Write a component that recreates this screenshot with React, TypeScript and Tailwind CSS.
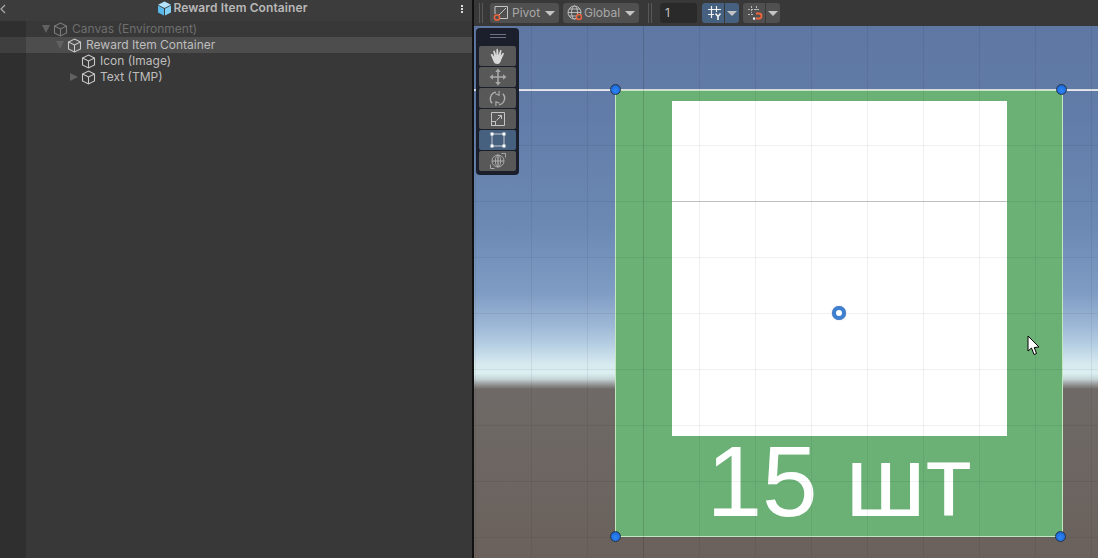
import React from 'react';

const font = { fontFamily: 'Inter, "Liberation Sans", sans-serif' };

function CubeIcon({ className = 'text-[#c4c4c4]' }: { className?: string }) {
  return (
    <svg width="15" height="15" viewBox="0 0 15 15" fill="none" stroke="currentColor" strokeWidth="1.1" className={className}>
      <path d="M7.5 1 L13.5 4 V11 L7.5 14 L1.5 11 V4 Z" />
      <path d="M1.5 4 L7.5 7 L13.5 4 M7.5 7 V14" />
    </svg>
  );
}

function HeaderCube() {
  return (
    <svg width="15" height="15" viewBox="0 0 15 15">
      <path d="M7.5 0.5 L14 3.8 L7.5 7 L1 3.8 Z" fill="#b4e4fb" />
      <path d="M1 4.6 L7 7.7 V14.5 L1 11.4 Z" fill="#58b8ea" />
      <path d="M14 4.6 L8 7.7 V14.5 L14 11.4 Z" fill="#82cff4" />
    </svg>
  );
}

function Row({ label, indent, arrow, dim, selected }: { label: string; indent: string; arrow?: 'down' | 'right'; dim?: boolean; selected?: boolean }) {
  return (
    <div className={`flex h-4 ${selected ? 'bg-[#3f3f3f]' : ''}`}>
      <div className="w-[26px] shrink-0" />
      <div className={`flex flex-1 items-center ${selected ? 'bg-[#4d4d4d]' : 'bg-[#383838]'} ${indent}`}>
        <div className="flex w-[14px] shrink-0 items-center justify-center">
          {arrow === 'down' && <div className="h-0 w-0 border-x-[4.5px] border-t-[8px] border-x-transparent border-t-[#616161]" />}
          {arrow === 'right' && <div className="h-0 w-0 border-y-[4.5px] border-l-[8px] border-y-transparent border-l-[#616161]" />}
        </div>
        <CubeIcon className={dim ? 'text-[#7a7a7a]' : 'text-[#c8c8c8]'} />
        <span className={`ml-[4px] text-[12px] font-normal leading-4 ${dim ? 'text-[#6e6e6e]' : 'text-[#bebebe]'}`}>{label}</span>
      </div>
    </div>
  );
}

function Hierarchy() {
  return (
    <div className="flex w-[472px] shrink-0 flex-col bg-[#2f2f2f]">
      <div className="relative flex h-[21px] items-center justify-center bg-[#3c3c3c] pb-[5px] pr-[7px]">
        <svg width="6" height="10" viewBox="0 0 6 10" fill="none" stroke="#aaaaaa" strokeWidth="1.2" className="absolute left-0 top-[4px]">
          <path d="M5 1 L1 5 L5 9" />
        </svg>
        <HeaderCube />
        <span className="ml-[1px] text-[12px] font-semibold tracking-[0.1px] text-[#b8b8b8]">Reward Item Container</span>
        <div className="absolute right-[9px] top-[5px] flex flex-col gap-[1px]">
          <div className="h-[2px] w-[2px] bg-[#dddddd]" />
          <div className="h-[2px] w-[2px] bg-[#dddddd]" />
          <div className="h-[2px] w-[2px] bg-[#dddddd]" />
        </div>
      </div>
      <Row label="Canvas (Environment)" indent="pl-[13px]" arrow="down" dim />
      <Row label="Reward Item Container" indent="pl-[27px]" arrow="down" selected />
      <Row label="Icon (Image)" indent="pl-[41px]" />
      <Row label="Text (TMP)" indent="pl-[41px]" arrow="right" />
      <div className="flex flex-1">
        <div className="w-[26px] shrink-0" />
        <div className="flex-1 bg-[#383838]" />
      </div>
    </div>
  );
}

function Caret() {
  return <div className="h-0 w-0 border-x-[5px] border-t-[5px] border-x-transparent border-t-[#c4c4c4]" />;
}

function Grip() {
  return (
    <div className="flex h-5 gap-[2px]">
      <div className="w-px bg-[#585858]" />
      <div className="w-px bg-[#585858]" />
    </div>
  );
}

function PivotIcon() {
  return (
    <svg width="16" height="16" viewBox="0 0 16 16" fill="none">
      <path d="M3 1.5 H14.5 V13.5 H7 M2 9 V1.5 H3 M5 11 L13 3" stroke="#c4c4c4" strokeWidth="1" />
      <circle cx="4" cy="12.5" r="2.6" stroke="#f0643c" strokeWidth="1.5" />
    </svg>
  );
}

function GlobalIcon() {
  return (
    <svg width="16" height="16" viewBox="0 0 16 16" fill="none" stroke="#c4c4c4" strokeWidth="0.9">
      <circle cx="7.5" cy="7.5" r="6.5" />
      <ellipse cx="7.5" cy="7.5" rx="3" ry="6.5" />
      <path d="M1 7.5 H14 M2 4 H13 M2 11 H9" />
      <circle cx="12" cy="12" r="2.5" fill="#505050" stroke="#f0643c" strokeWidth="1.4" />
    </svg>
  );
}

function SnapIcon() {
  return (
    <svg width="16" height="16" viewBox="0 0 16 16" fill="none" stroke="#f0f0f0" strokeWidth="1.2">
      <path d="M4.5 1 V13 M9.5 1 V7 M1 4.5 H14 M1 9.5 H7" />
      <path d="M8.5 8.5 L11 11.5 L13.5 8.5 M11 11.5 V15" strokeWidth="1.6" />
    </svg>
  );
}

function SnapMagnetIcon() {
  return (
    <svg width="16" height="16" viewBox="0 0 16 16" fill="none">
      <path d="M4.5 1 V8 M9.5 1 V5 M1 4.5 H13 M1 9.5 H6" stroke="#b8b8b8" strokeWidth="1" strokeDasharray="2 1" />
      <path d="M9 8.5 H12 A2.5 2.5 0 0 1 12 13.5 H9" stroke="#f0643c" strokeWidth="1.8" />
      <rect x="6" y="12.5" width="2.2" height="2.2" fill="#f0f0f0" />
    </svg>
  );
}

function Toolbar() {
  return (
    <div className="flex h-[26px] shrink-0 items-center bg-[#383838] text-[12px] text-[#a8a8a8]">
      <div className="ml-[5px]"><Grip /></div>
      <div className="ml-[7px] flex h-5 w-[69px] items-center rounded-[3px] bg-[#505050] pl-[3px]">
        <PivotIcon />
        <span className="ml-[3px]">Pivot</span>
        <div className="ml-[5px]"><Caret /></div>
      </div>
      <div className="ml-[4px] flex h-5 w-[76px] items-center rounded-[3px] bg-[#505050] pl-[4px]">
        <GlobalIcon />
        <span className="ml-[1px]">Global</span>
        <div className="ml-[5px]"><Caret /></div>
      </div>
      <div className="ml-[9px]"><Grip /></div>
      <div className="ml-[8px] flex h-5 w-[37px] items-center rounded-[3px] bg-[#2a2a2a] pl-[5px] text-[#c4c4c4]">1</div>
      <div className="ml-[5px] flex h-5 w-[37px] overflow-hidden rounded-[3px] bg-[#46607f]">
        <div className="flex w-[23px] items-center justify-center border-r border-[#383838] pl-[3px]"><SnapIcon /></div>
        <div className="flex flex-1 items-center justify-center"><Caret /></div>
      </div>
      <div className="ml-[4px] flex h-5 w-[37px] overflow-hidden rounded-[3px] bg-[#505050]">
        <div className="flex w-[23px] items-center justify-center border-r border-[#383838] pl-[2px]"><SnapMagnetIcon /></div>
        <div className="flex flex-1 items-center justify-center"><Caret /></div>
      </div>
    </div>
  );
}

function ToolButton({ active, children }: { active?: boolean; children: React.ReactNode }) {
  return (
    <div className={`flex h-5 w-[37px] items-center justify-center rounded-[2px] ${active ? 'bg-[#46607f]' : 'bg-[#585858]'}`}>
      {children}
    </div>
  );
}

function Toolbox() {
  return (
    <div className="absolute left-[2px] top-[2px] flex h-[147px] w-[43px] flex-col items-center rounded-[4px] bg-[#1a1f2b]">
      <div className="mt-[6px] flex h-[12px] flex-col gap-[2px]">
        <div className="h-px w-4 bg-[#6c7280]" />
        <div className="h-px w-4 bg-[#6c7280]" />
      </div>
      <div className="flex flex-col gap-px">
        <ToolButton>
          <svg width="17" height="17" viewBox="0 0 16 16" fill="#d8d8d8">
            <path d="M2 7 C1 6 2.5 5 3.5 6 L5 8.5 L4 3 C4 2 5.3 2 5.6 3 L6.8 6.8 L7 1.5 C7 0.5 8.4 0.5 8.5 1.5 L9 6.8 L10.3 2.4 C10.6 1.4 11.9 1.7 11.7 2.8 L11 7.5 L12.6 5 C13.2 4.2 14.4 4.8 13.9 5.8 L11.5 11 C11 13.5 10 15 8 15 C5.5 15 5 14 4 12 Z" />
          </svg>
        </ToolButton>
        <ToolButton>
          <svg width="18" height="18" viewBox="0 0 16 16" fill="#a8a8a8" stroke="#a8a8a8" strokeWidth="1.4">
            <path d="M8 2 V14 M2 8 H14" fill="none" />
            <path d="M8 0.5 L10.5 3.5 H5.5 Z M8 15.5 L10.5 12.5 H5.5 Z M0.5 8 L3.5 5.5 V10.5 Z M15.5 8 L12.5 5.5 V10.5 Z" stroke="none" />
          </svg>
        </ToolButton>
        <ToolButton>
          <svg width="17" height="17" viewBox="0 0 16 16" fill="none" stroke="#b0b0b0" strokeWidth="1.3">
            <path d="M3 12.5 A6.3 6.3 0 0 1 6.5 2 M13 3.5 A6.3 6.3 0 0 1 9.5 14" />
            <path d="M9.5 1 L9.5 5 L6 3.5 M6.5 15 L6.5 11 L10 12.5" strokeWidth="1" />
          </svg>
        </ToolButton>
        <ToolButton>
          <svg width="16" height="16" viewBox="0 0 16 16" fill="none" stroke="#c4c4c4" strokeWidth="1">
            <path d="M1.5 10 V1.5 H14.5 V14.5 H6" />
            <rect x="1.5" y="10.5" width="4" height="4" />
            <path d="M6.5 9.5 L11.5 4.5 M8 4.5 H11.5 V8" />
          </svg>
        </ToolButton>
        <ToolButton active>
          <svg width="16" height="16" viewBox="0 0 16 16" fill="#ffffff">
            <path d="M2 2 H14 V14 H2 Z" fill="none" stroke="#e8e8e8" strokeWidth="0.8" />
            <rect x="0.5" y="0.5" width="3" height="3" />
            <rect x="12.5" y="0.5" width="3" height="3" />
            <rect x="0.5" y="12.5" width="3" height="3" />
            <rect x="12.5" y="12.5" width="3" height="3" />
          </svg>
        </ToolButton>
        <ToolButton>
          <svg width="18" height="18" viewBox="0 0 18 18" fill="none" stroke="#b0b0b0" strokeWidth="0.9">
            <circle cx="9" cy="9" r="6" />
            <ellipse cx="9" cy="9" rx="2.6" ry="6" />
            <path d="M3 9 H15 M9 3 V15" strokeWidth="1.2" />
            <path d="M12.5 1.5 H16.5 V5.5 M5.5 16.5 H1.5 V12.5" />
          </svg>
        </ToolButton>
      </div>
    </div>
  );
}

function Handle({ className }: { className: string }) {
  return <div className={`absolute h-[11px] w-[11px] rounded-full border border-[#26354d] bg-[radial-gradient(circle_at_50%_60%,#2f86f5_0%,#1f6ee0_60%,#17509f_100%)] ${className}`} />;
}

function GridOverlay() {
  const xs = [1, 57, 113, 225, 281, 337, 393, 449, 505, 561, 617];
  const ys = [63, 119, 231, 287, 343, 399, 455, 511];
  return (
    <svg width="624" height="532" className="pointer-events-none absolute left-0 top-0">
      {xs.map((x) => (
        <line key={x} x1={x + 0.5} y1="0" x2={x + 0.5} y2="532" stroke="#000000" strokeOpacity="0.06" />
      ))}
      {ys.map((y) => (
        <line key={y} x1="0" y1={y + 0.5} x2="624" y2={y + 0.5} stroke="#000000" strokeOpacity="0.06" />
      ))}
      <line x1="169.5" y1="0" x2="169.5" y2="532" stroke="#000000" strokeOpacity="0.14" />
      <line x1="0" y1="175.5" x2="624" y2="175.5" stroke="#000000" strokeOpacity="0.06" />
      <line x1="198" y1="175.5" x2="533" y2="175.5" stroke="#000000" strokeOpacity="0.2" />
    </svg>
  );
}

function Scene() {
  return (
    <div className="relative flex-1 overflow-hidden bg-[linear-gradient(180deg,#5e78a3_0px,#617ca8_90px,#6c89b4_200px,#7f9cc4_267px,#9db8d6_300px,#b8d0e4_320px,#d4e8ee_337px,#dcf0f2_347px,#c5d5d8_353px,#9a9c9c_358px,#6f6a67_363px,#6a615c_532px)]">
      <div className="absolute left-0 top-[63px] h-[2px] w-full bg-[#e6e8ee]" />

      <div className="absolute left-[141px] top-[64px] h-[447px] w-[448px] border border-[#c3e8c0] bg-[#6bb176]">
        <div className="ml-[56px] mt-[10px] h-[335px] w-[335px] bg-white" />
        <div
          className="mt-[-5px] text-center text-[100px] leading-[100px] text-white"
          style={{ fontFamily: '"Liberation Sans", Arial, sans-serif' }}
        >
          15 шт
        </div>
      </div>

      <GridOverlay />

      <Handle className="left-[136px] top-[58px]" />
      <Handle className="left-[582px] top-[58px]" />
      <Handle className="left-[136px] top-[505px]" />
      <Handle className="left-[581px] top-[505px]" />

      {/* pivot */}
      <div className="absolute left-[358px] top-[280px] h-[14px] w-[14px] rounded-full border-[4px] border-[#3f7fd0] bg-white shadow-[0_0_1px_#6b7a90]" />

      {/* mouse cursor */}
      <svg width="14" height="21" viewBox="0 0 14 21" className="absolute left-[553px] top-[309px]">
        <path d="M1 1 V16 L4.5 13 L7 19.5 L9.5 18.5 L7.2 12.5 L12 12 Z" fill="#ffffff" stroke="#000000" strokeWidth="1" />
      </svg>

      <Toolbox />
    </div>
  );
}

export default function App() {
  return (
    <div className="flex h-[558px] w-[1098px] overflow-hidden bg-[#383838]" style={font}>
      <Hierarchy />
      <div className="w-[2px] shrink-0 bg-[#111111]" />
      <div className="flex flex-1 flex-col">
        <Toolbar />
        <Scene />
      </div>
    </div>
  );
}
